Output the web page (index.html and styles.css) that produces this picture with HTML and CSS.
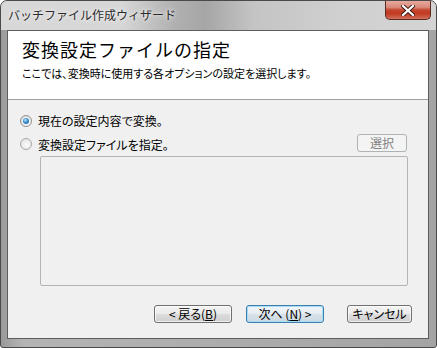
FILE: index.html
```html
<!DOCTYPE html>
<html lang="ja">
<head>
<meta charset="utf-8">
<link rel="stylesheet" href="styles.css">
</head>
<body>
<div class="window">
  <div class="titlebar">
    <span class="title">バッチファイル作成ウィザード</span>
    <div class="close">
      <svg width="14" height="11" viewBox="0 0 14 11"><path d="M2 1 L12 10 M12 1 L2 10" stroke="#3a1a14" stroke-width="4" stroke-linecap="square"/><path d="M2 1 L12 10 M12 1 L2 10" stroke="#ffffff" stroke-width="2.2" stroke-linecap="square"/></svg>
    </div>
  </div>
  <div class="client">
    <div class="header">
      <h1 class="heading">変換設定ファイルの指定</h1>
      <p class="subheading">ここでは、変換時に使用する各オプションの設定を選択します。</p>
    </div>
    <div class="body">
      <div class="opt">
        <span class="radio checked"></span>
        <span class="label">現在の設定内容で変換。</span>
      </div>
      <div class="opt opt2">
        <span class="radio"></span>
        <span class="label">変換設定ファイルを指定。</span>
        <span class="btn disabled select">選択</span>
      </div>
      <div class="box"></div>
      <div class="buttons">
        <span class="btn back">&lt;&nbsp;戻る(<u>B</u>)</span>
        <span class="btn default next">次へ&nbsp;(<u>N</u>)&nbsp;&gt;</span>
        <span class="btn cancel">キャンセル</span>
      </div>
    </div>
  </div>
</div>
</body>
</html>
```

FILE: styles.css
```css
html, body {
  margin: 0;
  padding: 0;
  background: #ffffff;
}
body {
  font-family: "Noto Sans CJK JP", "Noto Sans", sans-serif;
  color: #000;
}
.window {
  width: 437px;
  height: 348px;
  box-sizing: border-box;
  border: 1px solid #4a4a4a;
  border-radius: 7px 7px 3px 3px;
  background: linear-gradient(to right, #9a9a9a 0%, #b4b4b4 5%, #a4a4a4 100%);
  display: flex;
  flex-direction: column;
  overflow: hidden;
}
.titlebar {
  height: 29px;
  flex: none;
  display: flex;
  align-items: flex-start;
  justify-content: space-between;
  background: linear-gradient(to right, #d8d8d8 0%, #d6d6d6 28%, #b0b0b0 40%, #a6a6a6 47%, #c4c4c4 58%, #d0d0d0 78%, #d4d4d4 100%);
}
.title {
  font-size: 12px;
  line-height: 16px;
  margin: 6px 0 0 7px;
  color: #2a2a2a;
  text-shadow: 0 0 6px #f0f0f0, 0 0 3px #f4f4f4;
}
.close {
  width: 46px;
  height: 19px;
  margin-right: 5px;
  box-sizing: border-box;
  border: 1px solid #5b2a20;
  border-top: none;
  border-radius: 0 0 5px 5px;
  background: linear-gradient(#e6a99d 0%, #d98a7a 35%, #c4452f 50%, #c13a22 70%, #d2715c 100%);
  display: flex;
  align-items: center;
  justify-content: center;
}
.close svg { display: block; }
.client {
  flex: none;
  height: 309px;
  margin: 0 7px 0 6px;
  box-sizing: border-box;
  border: 1px solid #5d5d5d;
  background: #f0f0f0;
  display: flex;
  flex-direction: column;
}
.header {
  height: 69px;
  flex: none;
  box-sizing: border-box;
  background: #ffffff;
  border-bottom: 1px solid #a0a0a0;
  padding: 6px 0 0 14px;
}
.heading {
  margin: 0;
  font-weight: normal;
  font-size: 18px;
  line-height: 24px;
  letter-spacing: 1px;
}
.subheading {
  margin: 4px 0 0;
  font-size: 11px;
  line-height: 16px;
  font-feature-settings: "palt";
}
.body {
  flex: 1;
  display: flex;
  flex-direction: column;
  padding: 13px 20px 0 12px;
}
.opt {
  display: flex;
  align-items: center;
  height: 16px;
}
.opt2 {
  height: 18px;
  margin-top: 5px;
}
.label {
  font-size: 12px;
  line-height: 16px;
  margin-left: 6px;
  font-feature-settings: "palt";
}
.opt2 .label { margin-top: 3px; }
.radio {
  width: 12px;
  height: 12px;
  box-sizing: border-box;
  border-radius: 50%;
  border: 1px solid #8f8f8f;
  background: radial-gradient(circle at 60% 60%, #ffffff 0%, #f2f2f2 40%, #d4d4d4 100%);
  display: flex;
  align-items: center;
  justify-content: center;
  flex: none;
}
.radio.checked::after {
  content: "";
  width: 6px;
  height: 6px;
  border-radius: 50%;
  background: radial-gradient(circle at 40% 35%, #b8e6ff 0%, #3b8fd0 45%, #0f4a80 100%);
}
.opt2 .radio { margin-top: 2px; border-color: #a8a8a8; background: radial-gradient(circle at 60% 60%, #fafafa 0%, #ededed 50%, #dcdcdc 100%); }
.btn {
  box-sizing: border-box;
  height: 18px;
  border: 1px solid #707070;
  border-radius: 3px;
  background: linear-gradient(#f3f3f3 0%, #ebebeb 48%, #dddddd 52%, #cfcfcf 100%);
  font-size: 12px;
  line-height: 16px;
  display: flex;
  align-items: center;
  justify-content: center;
  font-feature-settings: "palt";
  box-shadow: inset 0 0 0 1px rgba(255,255,255,0.7);
}
.btn u { text-underline-offset: 1px; }
.select {
  width: 50px;
  margin-left: auto;
  margin-right: 1px;
}
.disabled {
  color: #838383;
  border-color: #adb2b5;
  background: #f4f4f4;
  box-shadow: none;
}
.box {
  height: 130px;
  margin: 4px 0 0 20px;
  box-sizing: border-box;
  border: 1px solid #b5b5b5;
  border-radius: 2px;
  background: #f0f0f0;
  flex: none;
}
.buttons {
  margin-top: 19px;
  display: flex;
  justify-content: flex-end;
  margin-right: -4px;
}
.back { width: 78px; }
.next { width: 78px; margin-left: 14px; }
.cancel { width: 65px; margin-left: 23px; }
.default {
  border-color: #3c7fb1;
  background: linear-gradient(#f1f6f9 0%, #e6edf2 48%, #d8e2e9 52%, #ccd9e2 100%);
  box-shadow: inset 0 0 0 1px #a8dcf4;
}
```
